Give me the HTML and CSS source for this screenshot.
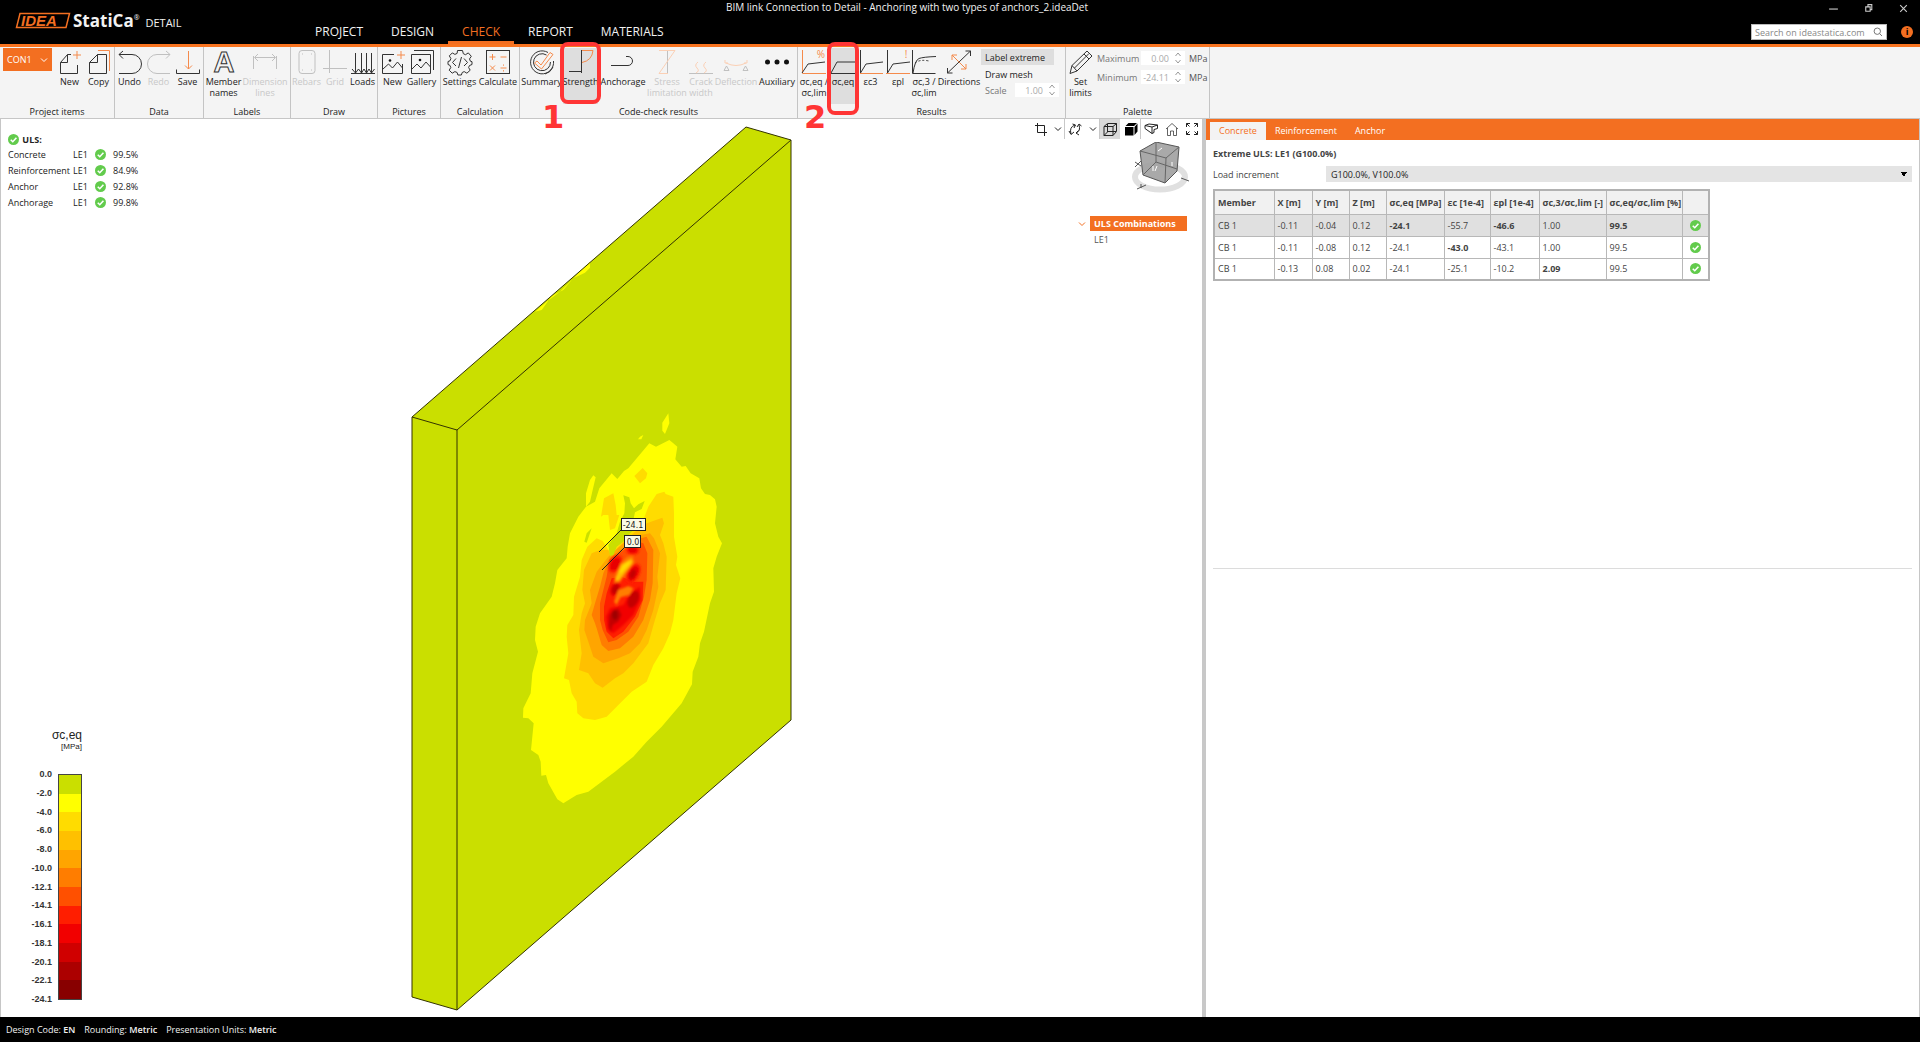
FILE: index.html
```html
<!DOCTYPE html>
<html lang="en">
<head>
<meta charset="utf-8">
<title>IDEA StatiCa Detail</title>
<link rel="stylesheet" href="styles.css">
</head>
<body>
<svg class="defs" aria-hidden="true">
  <symbol id="ok" viewBox="0 0 12 12"><circle cx="6" cy="6" r="6" fill="#62cb4c"/><path d="M3 6.2l2.2 2.2L9.2 4" fill="none" stroke="#fff" stroke-width="1.7"/></symbol>
  <symbol id="chev" viewBox="0 0 8 8"><path d="M1 2.5l3 3 3-3" fill="none" stroke="currentColor"/></symbol>
  <symbol id="updown" viewBox="0 0 8 14"><path d="M1.5 5L4 2l2.500 3M1.500 9L4 12l2.500-3" fill="none" stroke="currentColor"/></symbol>
</svg>

<header class="titlebar">
  <div class="brand">
    <svg class="logo" viewBox="0 0 56 17" aria-hidden="true"><path d="M5 1.500H54.500L51 15.500H1.500z" fill="none" stroke="#f36f21" stroke-width="1.500"/><text x="6" y="14" class="logo-text">IDEA</text></svg>
    <span class="brand-name">StatiCa<sup>®</sup></span>
    <span class="brand-app">DETAIL</span>
  </div>
  <nav class="tabs">
    <a href="#project">PROJECT</a><a href="#design">DESIGN</a><a href="#check" class="current">CHECK</a><a href="#report">REPORT</a><a href="#materials">MATERIALS</a>
  </nav>
  <h1 class="doc-title">BIM link Connection to Detail - Anchoring with two types of anchors_2.ideaDet</h1>
  <div class="window-side">
    <div class="window-buttons">
      <button aria-label="Minimize"><svg viewBox="0 0 10 10"><path d="M1 5.500h8"/></svg></button>
      <button aria-label="Restore"><svg viewBox="0 0 10 10"><path d="M2.500 3.500h4v4h-4zM4.500 3V1.500h3.500v4.500H7"/></svg></button>
      <button aria-label="Close"><svg viewBox="0 0 10 10"><path d="M2 2l6 6M8 2l-6 6"/></svg></button>
    </div>
    <div class="search-row">
      <label class="search"><input type="text" aria-label="Search" placeholder="Search on ideastatica.com"><svg viewBox="0 0 10 10"><path d="M6.500 6.500L9 9M7.500 4.200a3.200 3.200 0 1 1-6.400 0a3.200 3.200 0 0 1 6.400 0z"/></svg></label>
      <button class="info" aria-label="Information">i</button>
    </div>
  </div>
</header>

<section class="ribbon" aria-label="Ribbon">
  <div class="group">
    <div class="tools">
      <button class="project-item">CON1 <svg viewBox="0 0 8 8"><use href="#chev"/></svg></button>
      <button class="tool w29"><svg viewBox="0 0 24 26"><path d="M13 5.500H9.500L2.500 13.500V24.500H19.500V16M9.500 5.500V13.500H2.500"/><path class="o" d="M19 2v8M15 6h8"/></svg><span>New</span></button>
      <button class="tool w29"><svg viewBox="0 0 24 26"><path d="M10.500 5.500H19.500V24.500H2.500V13.500zM10.500 5.500V13.500H2.500"/><path class="o" d="M11 1.500H22.500V22"/></svg><span>Copy</span></button>
    </div>
    <h2>Project items</h2>
  </div>
  <div class="group">
    <div class="tools">
      <button class="tool w29"><svg viewBox="0 0 24 26"><path d="M1 5.500H14a9.500 9.500 0 0 1 0 19H1M5 2L1 5.500l4 4"/></svg><span>Undo</span></button>
      <button class="tool w29" disabled><svg viewBox="0 0 24 26"><path d="M23 5.500H10a9.500 9.500 0 0 0 0 19H23M19 2l4 3.500-4 4"/></svg><span>Redo</span></button>
      <button class="tool w29"><svg viewBox="0 0 24 26"><path class="o" d="M12.500 2v18M9 16.500l3.500 3.500 3.500-3.500"/><path d="M.5 20.500v4h23v-4"/></svg><span>Save</span></button>
    </div>
    <h2>Data</h2>
  </div>
  <div class="group">
    <div class="tools">
      <button class="tool w39"><svg viewBox="0 0 24 26" aria-hidden="true"><text class="letter" x="12" y="23">A</text></svg><span>Member<br>names</span></button>
      <button class="tool w44" disabled><svg viewBox="0 0 24 26"><path d="M.5 20V7M23.500 20V7M2 8.500h20M5 5L1.500 8.500 5 12M19 5l3.500 3.500L19 12"/></svg><span>Dimension<br>lines</span></button>
    </div>
    <h2>Labels</h2>
  </div>
  <div class="group">
    <div class="tools">
      <button class="tool w31" disabled><svg viewBox="0 0 24 26"><rect x="4" y="1.500" width="16" height="23" rx="3"/><path class="dots" d="M7 5h1M16 5h1M7 21h1M16 21h1"/></svg><span>Rebars</span></button>
      <button class="tool w26" disabled><svg viewBox="0 0 24 26"><path d="M6.500 1v23M0 19.500h24"/></svg><span>Grid</span></button>
      <button class="tool w29"><svg viewBox="0 0 24 26"><path d="M0 24.500h24M4.500 4v20M10.500 4v20M15.500 4v20M20.500 4v20M1 20l3.500 4 3-4 3 4 2.500-4 2.500 4 2.500-4 2.500 4 3-4"/></svg><span>Loads</span></button>
    </div>
    <h2>Draw</h2>
  </div>
  <div class="group">
    <div class="tools">
      <button class="tool w29"><svg viewBox="0 0 24 26"><path d="M13 5.500H1.500v19h20V15M2 20l5.500-5 4 4 5-6 5 6"/><circle class="fill" cx="9" cy="11.500" r="1.300"/><path class="o" d="M20 2v8M16 6h8"/></svg><span>New</span></button>
      <button class="tool w29"><svg viewBox="0 0 24 26"><path d="M1.500 5.500h19v19h-19zM4 1.500h19.500V21M2 20l5-5 4 4 5-6 4.500 5"/><circle class="fill" cx="10" cy="11" r="1.300"/></svg><span>Gallery</span></button>
    </div>
    <h2>Pictures</h2>
  </div>
  <div class="group">
    <div class="tools">
      <button class="tool w37"><svg viewBox="0 0 24 26"><path d="M9.500 1.500h5l.8 3.200 2.200 1 2.800-1.800 3 3.400-1.800 2.600.9 2.300 1.600.5v2.800l-2.500 1-.9 2 1.600 2.700-3.300 3-2.700-1.600-2 .9-.8 2.500h-3.500l-.8-2.500-2.200-.9-2.700 1.600-3-3 1.600-2.700-.9-2.200-1.900-.8v-3l2-.7.9-2.300-1.600-2.600 3-3 2.600 1.500 2.200-1z"/><path d="M8 9.500L4.500 13.500 8 17M16 9.500l3.500 4L16 17M13.500 8l-3 11"/></svg><span>Settings</span></button>
      <button class="tool w40"><svg viewBox="0 0 24 26"><rect x=".5" y="1.500" width="23" height="23"/><path class="o" d="M3.500 8h6M6.500 5v6M14.500 8h6M4 16.500l5 5M9 16.500l-5 5M14.500 19h6M17.500 15.500v1.200M17.500 21.200v1.300"/></svg><span>Calculate</span></button>
    </div>
    <h2>Calculation</h2>
  </div>
  <div class="group">
    <div class="tools">
      <button class="tool w43"><svg viewBox="0 0 24 26"><path d="M18 3.500A11.500 11.500 0 1 0 23.500 12M16.500 6A8.500 8.500 0 1 0 20.500 13M23 18a12 12 0 0 1-8 7"/><path class="o" d="M7 12l4 4L20 3.500l3 2L11.500 20 4.500 14z"/></svg><span>Summary</span></button>
      <button class="tool w35 selected"><svg viewBox="0 0 24 26"><path d="M0 22.500h12M12.500 1v23"/><path class="o" d="M13 1.500h11q-1 10-11 12"/></svg><span>Strength</span><i class="mark mark-one"></i><b class="mark-number one">1</b></button>
      <button class="tool w50"><svg viewBox="0 0 24 26"><path d="M0 16.500h17a4.500 4.500 0 0 0 0-9h-2"/></svg><span>Anchorage</span></button>
      <button class="tool w38" disabled><svg viewBox="0 0 24 26"><path d="M12.500 1v23"/><path class="o" d="M4 24.500L20 1.500H4M4 24.500h9"/></svg><span>Stress<br>limitation</span></button>
      <button class="tool w30" disabled><svg viewBox="0 0 24 26"><path d="M0 24.500h24"/><path class="o" d="M9 13q-4 3-1 6t-1 5M17 13q-4 3-1 6t-1 5"/></svg><span>Crack<br>width</span></button>
      <button class="tool w40" disabled><svg viewBox="0 0 24 26"><path d="M0 21.500L2.500 17l2.500 4.500zM19 21.500l2.500-4.500 2.500 4.500z"/><path class="o" d="M2 14q10 5 20 0M1 11v3h3M23 11v3h-3"/></svg><span>Deflection</span></button>
      <button class="tool w42"><svg viewBox="0 0 24 26"><g class="fill"><circle cx="2.500" cy="13" r="2.500"/><circle cx="12" cy="13" r="2.500"/><circle cx="21.500" cy="13" r="2.500"/></g></svg><span>Auxiliary</span></button>
    </div>
    <h2>Code-check results</h2>
  </div>
  <div class="group">
    <div class="tools">
      <button class="tool w32"><svg viewBox="0 0 24 26"><path class="o" d="M.5 1v23.500h23.500"/><path d="M0 24L6 15l17-2"/><text class="sign" x="19" y="9">%</text></svg><span>σc,eq /<br>σc,lim</span></button>
      <button class="tool w26 selected"><svg viewBox="0 0 24 26"><path d="M0 24.500h24M0 24L6 13H24"/></svg><span>σc,eq</span><i class="mark mark-two"></i><b class="mark-number two">2</b></button>
      <button class="tool w29"><svg viewBox="0 0 24 26"><path class="o" d="M1 24.500h23"/><path d="M1.500 1v23L7 15l17-2"/></svg><span>εc3</span></button>
      <button class="tool w26"><svg viewBox="0 0 24 26"><path class="o" d="M0 24.500h24"/><path d="M1.500 1v23L7 15l17-2"/><text class="sign" x="20" y="9">!</text></svg><span>εpl</span></button>
      <button class="tool w26"><svg viewBox="0 0 24 26"><path d="M.5 1v23.500h23M1 24Q3 11 7 9.500t17-2"/><path stroke-dasharray="2" d="M3 14q5-4 14-2"/></svg><span>σc,3 /<br>σc,lim</span></button>
      <button class="tool w44"><svg viewBox="0 0 24 26"><path d="M.5 24L23.500 2M.5 19v5h5M23.500 7V2h-5"/><path class="o" d="M5 6l14 14M5 11V6h5M19 15v5h-5"/></svg><span>Directions</span></button>
      <div class="options">
        <button class="option on">Label extreme</button>
        <button class="option">Draw mesh</button>
        <label class="field"><span>Scale</span><input value="1.00" disabled><svg viewBox="0 0 8 14"><use href="#updown"/></svg></label>
      </div>
    </div>
    <h2>Results</h2>
  </div>
  <div class="group">
    <div class="tools">
      <button class="tool w29"><svg viewBox="0 0 24 26"><path d="M1 24.500l2-8L18 2l5 5L8 22zM3 16.500l5 5.500M15 5l5 5M5.500 19L20 4.500"/></svg><span>Set<br>limits</span></button>
      <div class="limits">
        <label class="field"><span>Maximum</span><input value="0.00" disabled><svg viewBox="0 0 8 14"><use href="#updown"/></svg><b>MPa</b></label>
        <label class="field"><span>Minimum</span><input value="-24.11" disabled><svg viewBox="0 0 8 14"><use href="#updown"/></svg><b>MPa</b></label>
      </div>
    </div>
    <h2>Palette</h2>
  </div>
</section>

<main class="workspace">
  <section class="viewport" aria-label="3D view">
    <svg class="model" viewBox="1 119 1201 898" aria-label="Concrete stress map">
      <filter id="soft"><feGaussianBlur stdDeviation="3"/></filter>
      <path d="M412 417L746 127 791 140V720L457 1010 412 997z" fill="#cadf00"/>
      <g transform="translate(400 120) scale(.33333)"><path fill="#ffff00" d="M405 575L440 545 480 515 570 425V443L555 458 520 475 490 510 455 528 425 570z"/></g>
      <path d="M412 417L746 127 791 140V720L457 1010 412 997zM412 417L457 430 791 140M457 430V1010" fill="none" stroke="#333300"/>
      <g transform="translate(500 390) scale(.33333)">
        <g fill="#ffff00">
          <path d="M508 150L520 160 532 170 526 208 545 230 557 228 572 250 598 265 603 295 615 312 630 315 645 328 650 350 645 400 655 440 666 460 650 500 640 535 642 605 630 640 612 725 600 760 595 800 578 845 576 883 545 940 485 1010 440 1055 400 1100 345 1145 265 1205 230 1215 190 1240 172 1228 145 1180 138 1155 124 1157 122 1115 115 1095 93 1080 101 1000 85 985 69 983 70 955 92 910 97 850 114 785 105 750 107 710 120 670 155 620 165 580 172 540 200 505 203 470 210 430 235 380 258 350 285 335 298 295 335 250 352 267 372 243 385 235 448 160 468 170z"/>
          <path d="M505 70L508 100 495 132 487 122 487 98zM414 148L420 140 430 135 424 148zM258 350L258 310 270 270 280 256 287 262 278 300 270 335z"/>
        </g>
        <g fill="#ffdc00">
          <path d="M493 305L497 312 520 320 522 370 522 440 532 500 528 525 541 565 530 610 520 690 510 730 490 775 460 825 440 875 395 905 355 945 320 980 285 990 250 985 232 970 230 935 215 910 207 870 192 865 205 790 200 740 202 705 220 675 222 620 240 560 245 510 262 470 290 445 308 453 325 480 370 440 430 390 445 350 470 312z"/>
          <path d="M428 234L442 250 438 265 420 280 403 258zM303 380L312 325 340 310 347 345 350 375 358 375 345 415 330 420 325 375 310 375z"/>
        </g>
        <path fill="#ffc000" d="M487 383L492 400 480 435 490 460 500 500 497 600 480 640 462 700 445 760 400 820 370 850 345 865 308 893 285 880 265 850 237 840 245 790 237 720 245 670 255 640 247 600 252 540 275 490 300 480 325 480 335 500 400 430 440 400z"/>
        <path fill="#ffa500" d="M450 430L462 445 480 490 472 560 475 590 460 660 440 720 420 760 390 790 355 805 310 820 280 800 265 755 253 720 255 690 275 640 270 600 290 545 325 500 390 440z"/>
        <path fill="#ff7d00" d="M440 440L460 480 458 580 450 630 430 690 400 740 360 775 325 783 305 765 290 715 285 700 275 675 285 640 300 590 310 550 330 505 400 450z"/>
        <path fill="#ff5000" d="M430 460L442 490 440 570 432 620 415 680 385 725 350 750 325 757 308 720 300 690 300 640 310 600 320 560 328 510 385 470 415 455z"/>
        <path fill="#ff1e00" d="M430 575L428 630 405 680 370 725 340 745 320 725 312 690 312 650 320 610 335 565 365 560 400 575z"/>
        <g filter="url(#soft)">
          <path fill="#f20000" d="M420 590L422 630 400 675 370 705 340 730 322 718 318 680 330 655 370 645 390 610z"/>
          <g fill="#ff1e00">
            <ellipse cx="346" cy="522" rx="19" ry="29" transform="rotate(30 346 522)"/>
            <ellipse cx="400" cy="550" rx="19" ry="32" transform="rotate(28 400 550)"/>
            <ellipse cx="398" cy="480" rx="20" ry="15"/>
          </g>
          <g fill="#e80000">
            <ellipse cx="346" cy="522" rx="13" ry="21" transform="rotate(30 346 522)"/>
            <ellipse cx="400" cy="550" rx="13" ry="24" transform="rotate(28 400 550)"/>
            <ellipse cx="346" cy="597" rx="14" ry="22" transform="rotate(25 346 597)"/>
            <ellipse cx="398" cy="480" rx="13" ry="9"/>
          </g>
          <g fill="#c40000">
            <ellipse cx="398" cy="552" rx="8" ry="14" transform="rotate(25 398 552)"/>
            <ellipse cx="346" cy="597" rx="9" ry="15" transform="rotate(25 346 597)"/>
            <ellipse cx="400" cy="628" rx="15" ry="27" transform="rotate(25 400 628)"/>
            <path d="M355 655L365 675 355 695 338 705 332 728 326 705 328 675 340 660z"/>
          </g>
          <ellipse cx="345" cy="675" rx="9" ry="14" fill="#a00000"/>
          <path fill="#ff7d00" d="M398 498L403 515 378 550 360 577 342 578 345 560 362 520 382 500zM385 588L400 595 388 615 362 622 350 645 342 635 355 600z"/>
          <path fill="#ffc000" d="M394 506L398 518 375 546 355 572 345 570 364 525z"/>
          <path fill="#ffdc00" d="M388 514L390 520 372 540 362 550 358 545 370 524z"/>
        </g>
        <path fill="#cadf00" d="M370 316L388 322 392 340 402 355 415 343 434 333 425 357 405 367 400 390 400 420 385 435 370 455 350 470 340 495 330 498 325 465 350 430 360 395 373 370 375 340zM253 455L260 430 275 415 268 435 260 458z"/>
      </g>
      <path d="M621 530L599 552M624 548L602 570" stroke="#222"/>
      <g fill="#fafae6" stroke="#222"><rect x="621.500" y="518.500" width="24" height="12"/><rect x="624.500" y="535.500" width="16" height="12"/></g>
      <g class="callout"><text x="633" y="528">-24.1</text><text x="633" y="545">0.0</text></g>
    </svg>

    <table class="summary">
      <caption><svg class="ok"><use href="#ok"/></svg> ULS:</caption>
      <tr><th scope="row">Concrete</th><td>LE1</td><td><svg class="ok"><use href="#ok"/></svg></td><td>99.5%</td></tr>
      <tr><th scope="row">Reinforcement</th><td>LE1</td><td><svg class="ok"><use href="#ok"/></svg></td><td>84.9%</td></tr>
      <tr><th scope="row">Anchor</th><td>LE1</td><td><svg class="ok"><use href="#ok"/></svg></td><td>92.8%</td></tr>
      <tr><th scope="row">Anchorage</th><td>LE1</td><td><svg class="ok"><use href="#ok"/></svg></td><td>99.8%</td></tr>
    </table>

    <div class="view-tools">
      <button aria-label="Crop"><svg viewBox="0 0 14 14"><path d="M1 3.500h9.500V14M3.500 1v9.500H13"/></svg></button>
      <button class="drop" aria-label="Crop options"><svg viewBox="0 0 8 8"><use href="#chev"/></svg></button>
      <button class="sep" aria-label="Rotate"><svg viewBox="0 0 14 14"><path d="M3 12Q1 5 7 3M4.500 2L7.500 3 6 6M8 11q5-2 3-8M9 5l2-3 2.500 2M1 9l2 3.500L6 10M10.500 8.500L8 11l3 2"/></svg></button>
      <button class="drop" aria-label="Rotate options"><svg viewBox="0 0 8 8"><use href="#chev"/></svg></button>
      <button class="sep active" aria-label="Wireframe view"><svg viewBox="0 0 14 14"><path d="M1 4.500h9v9H1zM1 4.500l3.500-3h9l-3.500 3M13.500 1.500v8l-3.500 4M4.500 2v8L1 13.500M4.500 9.500h8.500"/></svg></button>
      <button aria-label="Solid view"><svg viewBox="0 0 14 14"><path class="fill" d="M1 5h8.500v8.500H1zM1.500 4L4.500 1H13l-3 3zM10.500 5L13.500 1.500V9.500l-3 3.500z"/></svg></button>
      <button class="sep" aria-label="Perspective"><svg viewBox="0 0 14 14"><path d="M1 3.500l4-1.500 8.500 1-5.500 2zM1 3.500v3l7 5V5M8 11.500l2-1V7.500l3.500-1V3"/></svg></button>
      <button aria-label="Home view"><svg viewBox="0 0 14 14"><path d="M1 7l6-5.500L13 7M2.500 6v7.500h3V9h3v4.500h3V6" opacity=".7"/></svg></button>
      <button aria-label="Fit to window"><svg viewBox="0 0 14 14"><path d="M1.500 5V1.500H5M1.500 1.500l3 3M9 1.500h3.500V5M12.500 1.500l-3 3M1.500 9v3.500H5M1.500 12.500l3-3M9 12.500h3.500V9M12.500 12.500l-3-3"/></svg></button>
    </div>

    <svg class="nav-cube" viewBox="0 0 60 52" aria-hidden="true">
      <ellipse cx="31" cy="35" rx="25" ry="12.500" fill="none" stroke="#e0e0e0" stroke-width="6"/>
      <path d="M11 9L27 0 50 5 48 29 36 41 14 33z" fill="#a0a0a0" fill-opacity=".9" stroke="#555"/>
      <path d="M11 9L37 16 50 5M37 16L36 41M27 0V20L14 33M27 20L48 27" fill="none" stroke="#666"/>
      <path d="M29 9l4-3M24 24v5M28 24l-2 5M43 20v4" stroke="#fff"/>
      <path d="M6 20l6 4M12 19l-6 6M8 47l9-4M12 42v4M52 36l8 3" stroke="#555"/>
    </svg>

    <ul class="tree">
      <li><button class="node selected"><svg viewBox="0 0 8 8"><use href="#chev"/></svg><span>ULS Combinations</span></button></li>
      <li><button class="node">LE1</button></li>
    </ul>

    <div class="legend">
      <p class="legend-title">σc,eq</p>
      <p class="legend-unit">[MPa]</p>
      <div class="scale">
        <ol class="ticks"><li>0.0</li><li>-2.0</li><li>-4.0</li><li>-6.0</li><li>-8.0</li><li>-10.0</li><li>-12.1</li><li>-14.1</li><li>-16.1</li><li>-18.1</li><li>-20.1</li><li>-22.1</li><li>-24.1</li></ol>
        <div class="bar"><i class="c1"></i><i class="c2"></i><i class="c3"></i><i class="c4"></i><i class="c5"></i><i class="c6"></i><i class="c7"></i><i class="c8"></i><i class="c9"></i><i class="c10"></i><i class="c11"></i><i class="c12"></i></div>
      </div>
    </div>
  </section>

  <section class="results" aria-label="Results">
    <nav class="result-tabs"><a href="#concrete" class="current">Concrete</a><a href="#reinforcement">Reinforcement</a><a href="#anchor">Anchor</a></nav>
    <div class="results-body">
      <h2>Extreme ULS: LE1 (G100.0%)</h2>
      <div class="increment">
        <label for="increment">Load increment</label>
        <select id="increment"><option>G100.0%, V100.0%</option></select>
      </div>
      <table class="checks">
        <colgroup><col class="k60"><col class="k38"><col class="k37"><col class="k37"><col class="k58"><col class="k46"><col class="k49"><col class="k67"><col class="k76"><col class="k27"></colgroup>
        <thead><tr><th>Member</th><th>X [m]</th><th>Y [m]</th><th>Z [m]</th><th>σc,eq [MPa]</th><th>εc [1e-4]</th><th>εpl [1e-4]</th><th>σc,3/σc,lim [-]</th><th>σc,eq/σc,lim [%]</th><th></th></tr></thead>
        <tbody>
          <tr class="current"><td>CB 1</td><td>-0.11</td><td>-0.04</td><td>0.12</td><td><b>-24.1</b></td><td>-55.7</td><td><b>-46.6</b></td><td>1.00</td><td><b>99.5</b></td><td><svg class="ok"><use href="#ok"/></svg></td></tr>
          <tr><td>CB 1</td><td>-0.11</td><td>-0.08</td><td>0.12</td><td>-24.1</td><td><b>-43.0</b></td><td>-43.1</td><td>1.00</td><td>99.5</td><td><svg class="ok"><use href="#ok"/></svg></td></tr>
          <tr><td>CB 1</td><td>-0.13</td><td>0.08</td><td>0.02</td><td>-24.1</td><td>-25.1</td><td>-10.2</td><td><b>2.09</b></td><td>99.5</td><td><svg class="ok"><use href="#ok"/></svg></td></tr>
        </tbody>
      </table>
    </div>
    <hr>
  </section>
</main>

<footer class="statusbar"><span>Design Code: <b>EN</b></span><span>Rounding: <b>Metric</b></span><span>Presentation Units: <b>Metric</b></span></footer>
</body>
</html>
```
FILE: styles.css
```css
* { box-sizing: border-box; }
body {
  margin: 0;
  min-height: 100vh;
  display: flex;
  flex-direction: column;
  background: #fff;
  color: #222;
  font: 9px/11px "Open Sans", "Noto Sans", sans-serif;
}
button, input, select { font: inherit; color: inherit; }
button { margin: 0; padding: 0; border: 0; background: none; }
h1, h2, p, ul, ol { margin: 0; padding: 0; font-size: inherit; font-weight: 400; list-style: none; }
a { color: inherit; text-decoration: none; }
.defs { position: absolute; width: 0; height: 0; }
.ok { display: block; width: 11px; height: 11px; }

/* Title bar */
.titlebar {
  height: 47px;
  display: flex;
  position: relative;
  background: #000;
  border-bottom: 3px solid #f97420;
  color: #f2f2f2;
}
.brand { width: 301px; padding: 5px 0 0 15px; display: flex; height: 36px; align-items: center; }
.logo { width: 56px; height: 17px; }
.logo-text { font: italic 700 15px "Liberation Sans", sans-serif; fill: #f36f21; }
.brand-name { margin-left: 2px; font-size: 17px; line-height: 20px; font-weight: 700; }
.brand-name sup { font-size: 7px; font-weight: 400; line-height: 1; }
.brand-app { margin: 4px 0 0 6px; font-size: 11px; }
.tabs { display: flex; align-items: flex-end; font-size: 12px; line-height: 16px; }
.tabs a { padding: 0 14px 1px; border-bottom: 3px solid transparent; }
.tabs .current { color: #f36f21; border-color: #f36f21; }
.doc-title { position: absolute; left: 0; right: 106px; top: 2px; text-align: center; font-size: 10px; }
.window-side { margin-left: auto; padding-right: 7px; position: relative; }
.window-buttons { display: flex; justify-content: flex-end; gap: 24px; padding: 3px 4px 10px 0; }
.window-buttons button, .window-buttons svg { display: block; width: 11px; height: 11px; }
.window-side svg { fill: none; stroke: #ccc; }
.search-row { display: flex; align-items: center; gap: 14px; }
.search { display: flex; align-items: center; width: 136px; height: 16px; background: #fff; border: 1px solid #bbb; padding: 0 3px; }
.search input { width: 100%; min-width: 0; padding: 0; border: 0; outline: 0; background: none; color: #777; }
.search input::placeholder { color: #888; opacity: 1; }
.search svg { width: 10px; height: 10px; flex: none; stroke: #777; }
.info { width: 12px; height: 12px; border-radius: 50%; background: #f36f21; color: #000; font-weight: 700; line-height: 12px; }

/* Ribbon */
.ribbon {
  display: grid;
  grid-template-columns: 115px 89px 87px 87px 63px 79px 278px 268px 144px;
  height: 72px;
  background: #f4f4f4;
  border-bottom: 1px solid #c6c6c6;
}
.group { display: flex; flex-direction: column; justify-content: space-between; border-right: 1px solid #c4c4c4; padding: 1px 0; }
.group h2 { text-align: center; }
.tools { display: flex; }
.tool { position: relative; flex: none; height: 56px; padding-top: 1px; display: flex; flex-direction: column; align-items: center; gap: 1px; white-space: nowrap; text-align: center; }
.tool svg { flex: none; width: 24px; height: 26px; fill: none; stroke: #333; overflow: visible; }
.tool svg .o { stroke: #f58a4b; }
.tool svg .fill { fill: #111; stroke: none; }
.tool .letter { font: 700 29px "Liberation Sans", sans-serif; text-anchor: middle; }
.tool .sign { font: 10px "Open Sans", sans-serif; text-anchor: middle; fill: #f58a4b; stroke: none; }
.tool:disabled { color: #c8c8c8; }
.tool:disabled svg { stroke: #c0c0c0; }
.tool:disabled .o { stroke: #fbd0b5; }
.tool.selected { background: #dedede; }
.w26 { width: 26px; }
.w29 { width: 29px; }
.w30 { width: 30px; }
.w31 { width: 31px; }
.w32 { width: 32px; }
.w35 { width: 35px; }
.w37 { width: 37px; }
.w38 { width: 38px; }
.w39 { width: 39px; }
.w40 { width: 40px; }
.w42 { width: 42px; }
.w43 { width: 43px; }
.w44 { width: 44px; }
.w50 { width: 50px; }
.project-item { width: 49px; height: 23px; margin: 0 3px; padding: 0 4px; display: flex; align-items: center; justify-content: space-between; background: #f36f21; color: #fff; }
.project-item svg { width: 8px; height: 8px; }
.options { display: flex; flex-direction: column; gap: 1px; width: 78px; padding-top: 1px; }
.option { width: 73px; height: 16px; padding-left: 4px; text-align: left; }
.option.on { background: #dedede; }
.field { display: flex; align-items: center; height: 14px; color: #777; }
.field span { flex: 1; }
.field input { width: 30px; height: 14px; padding: 0 2px 0 0; border: 0; background: #fff; color: #aaa; text-align: right; }
.field svg { width: 14px; height: 14px; padding: 0 3px; color: #999; background: #fff; }
.field b { width: 22px; padding-left: 4px; font-weight: 400; color: #555; }
.options .field { margin-left: 4px; }
.limits { display: flex; flex-direction: column; gap: 5px; width: 112px; padding: 3px 0 0 2px; }

/* Review marks over the ribbon */
.mark { position: absolute; z-index: 2; border: 4px solid #ff3535; border-radius: 8px; }
.mark-one { left: -3px; right: -3px; top: -6px; bottom: 0; }
.mark-two { left: -3px; right: -3px; top: -6px; bottom: -11px; }
.mark-number { position: absolute; z-index: 2; color: #ff3535; font: 700 32px/32px "DejaVu Sans", sans-serif; }
.one { left: -21px; top: 53px; }
.two { left: -26px; top: 53px; }

/* Workspace */
.workspace { flex: 1; display: grid; grid-template-columns: 1206fr 714fr; }
.viewport { position: relative; min-height: 898px; border-left: 1px solid #c6c6c6; border-right: 4px solid #c8c8c8; }
.model { position: absolute; inset: 0; width: 100%; height: 100%; }
.callout { font: 8px "DejaVu Sans", sans-serif; text-anchor: middle; fill: #222; }
.summary { position: absolute; left: 7px; top: 15px; border-collapse: collapse; }
.summary caption { text-align: left; font-weight: 700; height: 12px; line-height: 12px; }
.summary caption svg { display: inline-block; vertical-align: top; margin-right: 1px; }
.summary th { width: 65px; font-weight: 400; text-align: left; }
.summary th, .summary td { padding: 0; height: 16px; }
.summary td:nth-child(2) { width: 22px; }
.summary td:nth-child(3) { width: 18px; }
.view-tools { position: absolute; right: 1px; top: 0; display: flex; align-items: center; }
.view-tools button { height: 20px; width: 20px; display: flex; align-items: center; justify-content: center; border-left: 1px solid transparent; }
.view-tools .drop { width: 14px; }
.view-tools .sep { width: 21px; border-color: #c8c8c8; }
.view-tools .active { background: #dadada; }
.view-tools svg { width: 14px; height: 14px; fill: none; stroke: #222; }
.view-tools .drop svg { width: 8px; height: 8px; }
.view-tools .fill { fill: #000; stroke: none; }
.nav-cube { position: absolute; right: 13px; top: 23px; width: 60px; height: 52px; }
.tree { position: absolute; right: 15px; top: 97px; width: 109px; }
.node { display: flex; align-items: center; width: 100%; height: 15px; padding-left: 16px; color: #555; text-align: left; }
.node.selected { padding: 0; color: #f36f21; }
.node.selected svg { width: 8px; height: 8px; margin-right: 4px; }
.node.selected span { flex: 1; padding-left: 4px; line-height: 15px; background: #f36f21; color: #fff; font-weight: 700; }
.node:not(.selected) { height: 17px; }
.legend { position: absolute; left: 25px; bottom: 17px; width: 56px; text-align: right; font-family: "Liberation Sans", Arial, sans-serif; }
.legend-title { font-size: 12px; line-height: 14px; }
.legend-unit { font-size: 8px; line-height: 10px; margin-bottom: 22px; }
.scale { display: flex; justify-content: space-between; }
.ticks { width: 26px; margin: -5px 0; height: 236px; display: flex; flex-direction: column; justify-content: space-between; font-weight: 700; color: #333; }
.bar { width: 24px; height: 226px; border: 1px solid #444; display: flex; flex-direction: column; }
.bar i { flex: 1; }
.c1 { background: #cadf00; }
.c2 { background: #ffff00; }
.c3 { background: #ffdc00; }
.c4 { background: #ffc000; }
.c5 { background: #ffa500; }
.c6 { background: #ff7d00; }
.c7 { background: #ff5000; }
.c8 { background: #ff1e00; }
.c9 { background: #f20000; }
.c10 { background: #d00000; }
.c11 { background: #ac0000; }
.c12 { background: #880000; }

/* Results panel */
.results { border-right: 1px solid #c6c6c6; color: #444; min-width: 0; }
.result-tabs { display: flex; height: 21px; align-items: flex-end; padding-left: 4px; background: #f36f21; color: #fff; line-height: 18px; }
.result-tabs a { padding: 0 9px; }
.result-tabs .current { background: #f3f3f3; color: #f36f21; }
.results-body { height: 428px; padding: 8px 7px 0; }
.results-body h2 { font-weight: 700; }
.increment { display: grid; grid-template-columns: 113px 1fr; align-items: center; margin: 7px 0; }
.increment select {
  appearance: none; height: 16px; padding: 0 5px; border: 0; border-radius: 0; color: #222;
  background: linear-gradient(to bottom left, #000 50%, transparent 50%) no-repeat right 5px center / 3px 5px, linear-gradient(to bottom right, #000 50%, transparent 50%) no-repeat right 8px center / 3px 5px, #e4e4e4;
}
.increment select { background: linear-gradient(to top left, transparent 50%, #000 50%) no-repeat right 5px center / 3px 5px, linear-gradient(to top right, transparent 50%, #000 50%) no-repeat right 8px center / 3px 5px, #e4e4e4; }
.checks { table-layout: fixed; width: 495px; border-collapse: collapse; border: 2px solid #b2b2b2; }
.checks th, .checks td { border: 1px solid #b8b8b8; padding: 0 3px; height: 22px; text-align: left; white-space: nowrap; }
.checks th { height: 24px; background: #f1f1f1; color: #444; font-weight: 700; }
.checks .current td { background: #e0e0e0; }
.checks .ok { margin: 0 auto; }
.k60 { width: 60px; }
.k38 { width: 38px; }
.k37 { width: 37px; }
.k58 { width: 58px; }
.k46 { width: 46px; }
.k49 { width: 49px; }
.k67 { width: 67px; }
.k76 { width: 76px; }
.k27 { width: 27px; }
hr { margin: 0 7px; border: 0; border-top: 1px solid #dcdcdc; }

/* Status bar */
.statusbar { display: flex; gap: 9px; height: 25px; align-items: center; padding-left: 6px; background: #000; color: #f2f2f2; }
.statusbar b { font-weight: 600; }
```
